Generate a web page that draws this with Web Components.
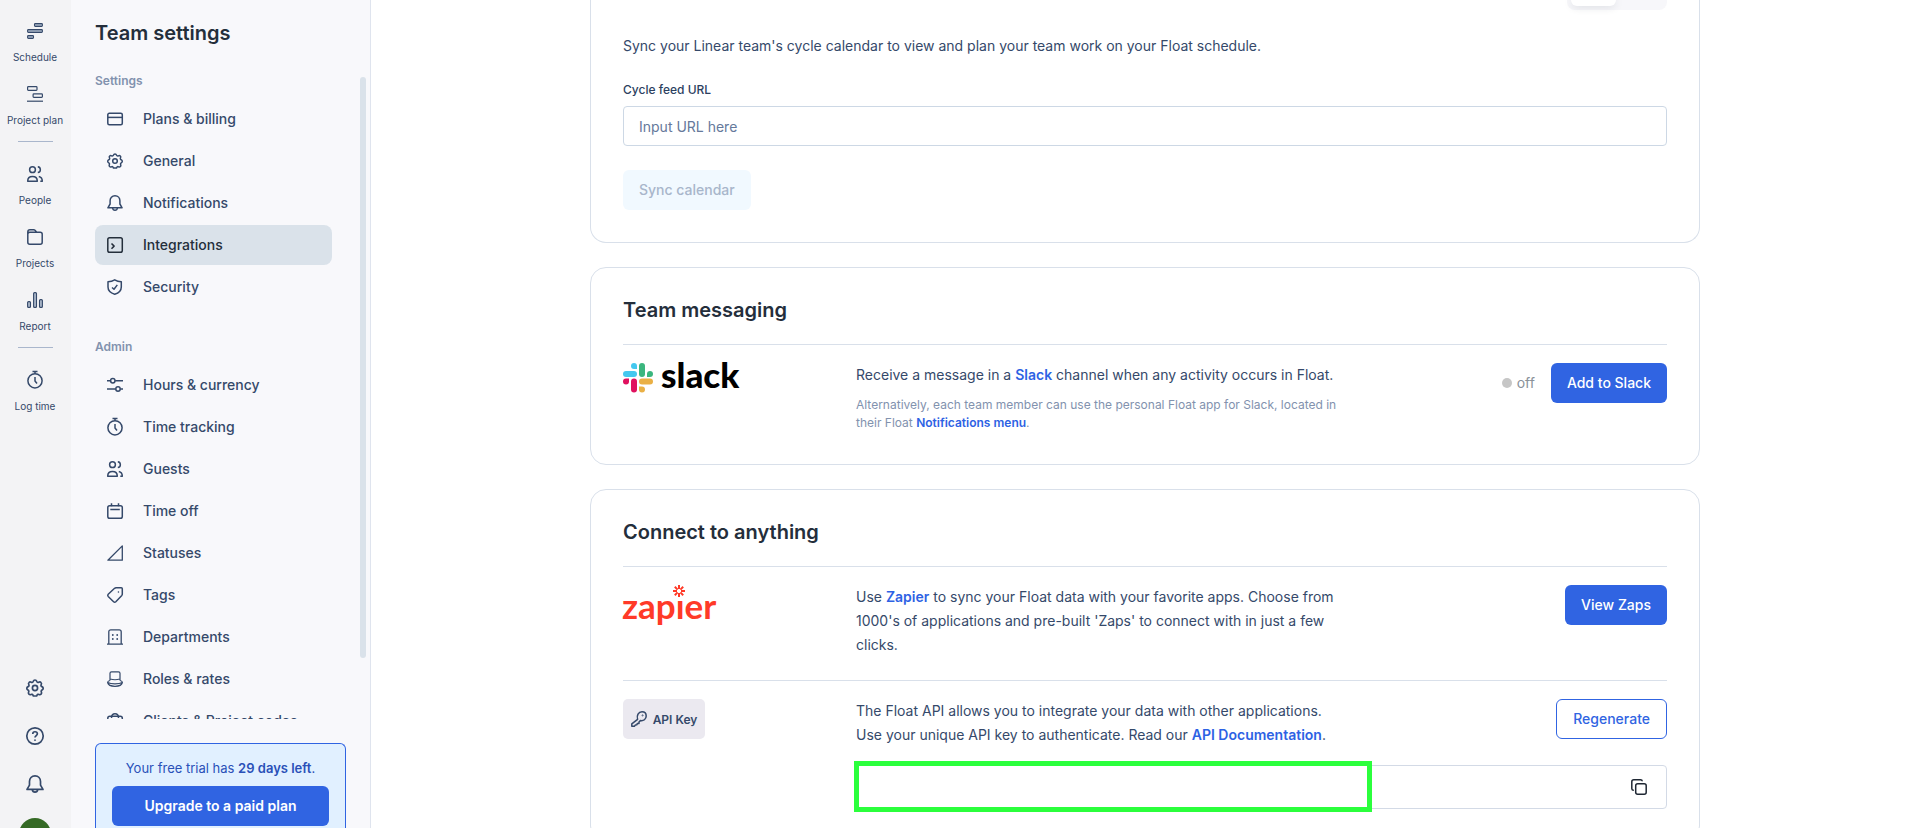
<!DOCTYPE html>
<html lang="en">
<head>
<meta charset="utf-8">
<title>Team settings</title>
<style>
  body {
    margin: 0;
    font-family: Inter, "Liberation Sans", sans-serif;
    font-size: 14px;
    color: #35496a;
    background: #fff;
    --ink: #242e3b;
    --text: #35496a;
    --muted: #8292ae;
    --line: #d9e0ea;
    --blue: #3064e2;
  }
</style>
</head>
<body>
<float-app></float-app>

<script>
const gear = '<path d="M8 .9c.8 0 1.300.4 1.500 1.100.3.900 1.100 1.200 1.900.800.7-.4 1.400-.3 1.900.3.500.500.6 1.200.2 1.800-.4.9-.1 1.600.7 1.900.7.300 1.100.8 1.100 1.500s-.4 1.200-1 1.500c-.8.4-1 1.100-.6 1.900.3.700.200 1.300-.3 1.800s-1.200.6-1.800.3c-.8-.4-1.500-.1-1.800.6l-.3.700h-3l-.3-.7c-.3-.7-1-1-1.800-.6-.6.300-1.300.2-1.800-.3s-.6-1.100-.3-1.800c.4-.8.2-1.500-.6-1.900-.6-.3-1-.8-1-1.500s.4-1.200 1.100-1.500c.8-.3 1.100-1 .7-1.900-.4-.6-.3-1.300.2-1.800.5-.6 1.200-.7 1.900-.3.800.4 1.600.1 1.900-.8.200-.7.700-1.100 1.500-1.100z"/><circle cx="8" cy="8" r="2.300"/>';
const people = '<circle cx="5.500" cy="3.700" r="2.900"/><path d="M.7 15.200c0-2.700 1.900-4.700 4.800-4.700s4.800 2 4.800 4.700z"/><path d="M10.800.8c3.400.4 3.400 5.400 0 5.800M11.800 10.500c2.200.5 3.500 2.300 3.500 4.700h-2"/>';
const watch = '<circle cx="8" cy="8.800" r="7.100"/><path d="M5.500-.6h5M8 5v4l2 2.500M8-.5v2"/>';
const bell = '<path d="M8 .8c-3 0-4.900 2.200-4.900 5v3.200L.9 12.800h14.200L12.900 9V5.800c0-2.800-1.900-5-4.900-5z"/><path d="M5.600 13c.2 1.500 1.200 2.200 2.400 2.200s2.200-.7 2.400-2.200"/>';
const ICONS = {
  gear, people, watch, bell,
  schedule: '<g fill="#a9b6c8" stroke-width="1.100"><rect x="7.500" y=".6" width="7.900" height="2.800" rx=".8"/><rect x=".6" y="6.600" width="14.800" height="2.800" rx=".8"/><rect x=".6" y="12.600" width="5.900" height="2.800" rx=".8"/></g>',
  plan: '<g stroke-width="1.200"><rect x=".6" y=".6" width="9.400" height="3.800" rx=".8"/><rect x="6.100" y="7.900" width="9.300" height="3.500" rx=".8"/><path d="M0 15.200h16"/></g>',
  folder: '<path d="M.8 3v10.200c0 1.100.8 2 2 2h10.400c1.200 0 2-.9 2-2V5.200c0-1.200-.8-2-2-2H9.700L8 1.300C7.600.9 7.200.8 6.700.8H3C1.700.8.8 1.700.8 3zM1 4.300c.4-.7 1-1.100 1.800-1.100h7"/>',
  report: '<g fill="#a9b6c8" stroke-width="1.100"><rect x=".6" y="9.600" width="2.900" height="5.800" rx="1"/><rect x="6.600" y=".6" width="2.900" height="14.800" rx="1"/><rect x="12.500" y="7.600" width="2.900" height="7.800" rx="1"/></g>',
  help: '<circle cx="8" cy="8" r="7.300"/><path d="M6 6.200c0-1.300.9-2 2-2s2.100.7 2.100 1.900c0 1.500-2.100 1.600-2.100 3.300"/><circle cx="8" cy="11.700" r=".5" fill="currentColor" stroke-width=".6"/>',
  card: '<rect x=".8" y="2.300" width="14.500" height="11.500" rx="1.500"/><path d="M1 6.400h14"/>',
  terminal: '<rect x=".8" y=".8" width="14.500" height="14.500" rx="1.800"/><path d="M4.500 6.500l2.600 2.600-2.600 2.600"/>',
  shield: '<path d="M7.700.8c2 1.200 4.200 1.800 6.600 1.900v5.400c0 3.600-3.200 6.200-6.600 7.200C4.300 14.300 1 11.700 1 8.100V2.700C3.500 2.600 5.700 2 7.700.8z"/><path d="M5 8.500l2 1.700 3.300-4.300"/>',
  sliders: '<circle cx="5.800" cy="3.700" r="2.200"/><circle cx="11" cy="12" r="2.200"/><path d="M0 3.700h3.500M8.200 3.700H16M0 12h8.700M13.400 12H16"/>',
  calendar: '<rect x=".8" y="2.800" width="14.500" height="12.400" rx="1.800"/><path d="M4.500.3v3M11.500.3v3M3.300 6.500h9.500"/>',
  triangle: '<path d="M15.300.9v14.300H.9z" stroke-width="1.300"/>',
  tag: '<path d="M9 .8h5.300c.6 0 1 .4 1 1V7c0 .5-.2 1-.5 1.400l-6 6.300c-.7.700-1.500.7-2.200 0L1.200 9.500c-.6-.7-.6-1.500 0-2.200L7.600 1.300C8 1 8.500.8 9 .8z"/><circle cx="11.400" cy="5" r=".5" stroke-width=".8"/>',
  building: '<path d="M0 15.200h16M1.800 15V2.800c0-1.200.8-2 2-2h8.400c1.200 0 2 .8 2 2V15" stroke-width="1.300"/><g fill="currentColor" stroke="none"><circle cx="5.800" cy="6" r=".9"/><circle cx="10.200" cy="6" r=".9"/><circle cx="5.800" cy="10" r=".9"/><circle cx="10.200" cy="10" r=".9"/></g>',
  hat: '<path d="M3 9.500V2.300C3 1.300 3.600.8 4.500.8h7c.9 0 1.500.5 1.500 1.500v7.200M3.200 8c2.800.9 6.800.9 9.600 0M3 9.500C.9 9.900.6 10.700.6 11.500c.5 2.300 3.600 3.800 7.400 3.800s6.900-1.500 7.400-3.800c0-.8-.3-1.600-2.400-2M.8 11.500c3.200 1.700 11.200 1.700 14.400 0" stroke-width="1.200"/>',
  briefcase: '<rect x=".8" y="3.300" width="14.500" height="11.500" rx="2"/><path d="M4.500 5C4.500 2.200 5.800.8 8 .8S11.500 2.200 11.500 5"/>',
  key: '<path d="M6.600 8.300C5.400 4.600 7.400.8 11 .8c2.600 0 4.200 1.900 4.200 4.200 0 3.300-2.800 5.200-5.800 4.600L8 11v1.500H6.300l-.4 1.300-1.500.2-1 1.200H.8v-2.300z"/><circle cx="11.600" cy="4.400" r=".6" stroke-width=".8"/>',
  copy: '<rect x="4.700" y="4.700" width="10.500" height="10.500" rx="2"/><path d="M2.800 11.200H2.300C1.400 11 .8 10.400.8 9.400V2.800c0-1.200.8-2 2-2h6.700c1 0 1.700.5 1.800 1.500"/>'
};

function define(name, html, setup) {
  const tpl = document.createElement('template');
  tpl.innerHTML = html;
  customElements.define(name, class extends HTMLElement {
    constructor() {
      super();
      this.attachShadow({ mode: 'open' }).append(tpl.content.cloneNode(true));
    }
    connectedCallback() {
      if (setup) setup(this, this.shadowRoot);
    }
  });
}

function addIcon(el, root) {
  const icon = document.createElement('ui-icon');
  icon.setAttribute('name', el.getAttribute('icon'));
  root.querySelector('a').prepend(icon);
}

define('ui-icon', `
  <style>
    :host { display: block; flex: none; width: 16px; height: 16px; }
    svg { display: block; width: 100%; height: 100%; overflow: visible; fill: none; stroke: currentColor; stroke-width: 1.500; stroke-linejoin: round; stroke-linecap: butt; }
  </style>
  <svg viewBox="0 0 16 16" aria-hidden="true"></svg>`,
  (el, root) => { root.querySelector('svg').innerHTML = ICONS[el.getAttribute('name')]; });

define('ui-button', `
  <style>
    :host { display: block; flex: none; }
    button { display: block; width: 100%; height: 40px; margin: 0; padding: 0 16px; border: 0; border-radius: 6px; background: var(--blue); color: #fff; font: 500 14px/20px Inter, "Liberation Sans", sans-serif; white-space: nowrap; }
    :host([kind=outline]) button { border: 1px solid var(--blue); background: #fff; color: var(--blue); }
    :host([kind=bold]) button { font-weight: 600; }
    button:disabled { background: #f1f9ff; color: #a8b6cb; }
  </style>
  <button type="button"><slot></slot></button>`,
  (el, root) => { root.querySelector('button').disabled = el.hasAttribute('disabled'); });

define('ui-link', `
  <style>
    :host { display: inline; }
    a { color: #2d62e4; font-weight: 600; text-decoration: none; }
  </style>
  <a href="#"><slot></slot></a>`);

define('rail-item', `
  <style>
    :host { display: block; height: 63px; }
    a { display: flex; flex-direction: column; align-items: center; gap: 10px; padding-top: 8px; color: inherit; text-decoration: none; font-size: 10px; line-height: 16px; white-space: nowrap; }
  </style>
  <a href="#"><slot></slot></a>`, addIcon);

define('app-rail', `
  <style>
    :host { display: flex; flex-direction: column; justify-content: space-between; align-items: flex-start; width: 71px; box-sizing: border-box; padding-top: 15px; background: #f3f3f5; }
    nav { width: 70px; }
    hr { width: 35px; height: 1px; margin: 0 auto 16px; border: 0; background: #a9b6cc; }
    .foot { display: flex; flex-direction: column; align-items: center; gap: 30px; width: 70px; margin-bottom: -22px; }
    .foot ui-icon { width: 18px; height: 18px; }
    .foot button { padding: 0; border: 0; background: none; color: inherit; }
    .avatar { width: 32px; height: 32px; margin-top: -5px; border-radius: 50%; background: #356a25; }
  </style>
  <nav>
    <rail-item icon="schedule">Schedule</rail-item>
    <rail-item icon="plan">Project plan</rail-item>
    <hr>
    <rail-item icon="people">People</rail-item>
    <rail-item icon="folder">Projects</rail-item>
    <rail-item icon="report">Report</rail-item>
    <hr>
    <rail-item icon="watch">Log time</rail-item>
  </nav>
  <div class="foot">
    <button type="button"><ui-icon name="gear"></ui-icon></button>
    <button type="button"><ui-icon name="help"></ui-icon></button>
    <button type="button"><ui-icon name="bell"></ui-icon></button>
    <div class="avatar"></div>
  </div>`);

define('nav-item', `
  <style>
    :host { display: block; }
    a { display: flex; align-items: center; gap: 20px; height: 40px; padding: 0 12px; border-radius: 8px; color: var(--text); font-weight: 500; line-height: 20px; text-decoration: none; white-space: nowrap; }
    :host([active]) a { background: #dae2ea; color: var(--ink); }
  </style>
  <a href="#"><slot></slot></a>`, addIcon);

define('nav-group', `
  <style>
    :host { display: grid; gap: 2px; }
    h2 { margin: 0 0 8px; color: var(--muted); font-size: 12px; font-weight: 600; line-height: 16px; }
  </style>
  <h2></h2>
  <slot></slot>`,
  (el, root) => { root.querySelector('h2').textContent = el.getAttribute('label'); });

define('trial-box', `
  <style>
    :host { display: block; padding: 15px 16px; border: 1px solid var(--blue); border-radius: 6px; background: #e1f0ff; color: #2a50b8; font-size: 13px; line-height: 18px; text-align: center; }
    p { margin: 0 0 9px; }
    b { font-weight: 600; }
  </style>
  <p>Your free trial has <b>29 days left</b>.</p>
  <ui-button kind="bold">Upgrade to a paid plan</ui-button>`);

define('settings-panel', `
  <style>
    :host { display: flex; flex-direction: column; width: 300px; box-sizing: border-box; padding: 23px 4px 0 24px; border-right: 1px solid #dfe4ee; background: #f8f8fb; }
    h1 { margin: 0 0 30px; color: var(--ink); font-size: 20px; font-weight: 600; line-height: 20px; }
    .body { display: flex; justify-content: space-between; flex: 1; min-height: 0; margin-bottom: 24px; }
    .list { display: flex; flex-direction: column; gap: 32px; width: 237px; overflow: hidden; }
    .thumb { width: 6px; height: 90%; margin-top: 4px; border-radius: 3px; background: #dae2ea; }
    trial-box { flex: none; height: 85px; box-sizing: border-box; margin-right: 20px; padding-bottom: 0; border-bottom: 0; border-radius: 6px 6px 0 0; }
  </style>
  <h1>Team settings</h1>
  <div class="body">
    <div class="list">
      <nav-group label="Settings">
        <nav-item icon="card">Plans &amp; billing</nav-item>
        <nav-item icon="gear">General</nav-item>
        <nav-item icon="bell">Notifications</nav-item>
        <nav-item icon="terminal" active>Integrations</nav-item>
        <nav-item icon="shield">Security</nav-item>
      </nav-group>
      <nav-group label="Admin">
        <nav-item icon="sliders">Hours &amp; currency</nav-item>
        <nav-item icon="watch">Time tracking</nav-item>
        <nav-item icon="people">Guests</nav-item>
        <nav-item icon="calendar">Time off</nav-item>
        <nav-item icon="triangle">Statuses</nav-item>
        <nav-item icon="tag">Tags</nav-item>
        <nav-item icon="building">Departments</nav-item>
        <nav-item icon="hat">Roles &amp; rates</nav-item>
        <nav-item icon="briefcase">Clients &amp; Project codes</nav-item>
      </nav-group>
    </div>
    <div class="thumb"></div>
  </div>
  <trial-box></trial-box>`);

define('ui-card', `
  <style>
    :host { display: block; padding: 32px; border: 1px solid var(--line); border-radius: 16px; background: #fff; }
    :host([scrolled]) { padding-top: 0; border-top: 0; border-radius: 0 0 16px 16px; }
    h2 { margin: 0 0 24px; color: var(--ink); font-size: 20px; font-weight: 600; line-height: 20px; }
    :host([scrolled]) h2 { display: none; }
  </style>
  <h2></h2>
  <slot></slot>`,
  (el, root) => { root.querySelector('h2').textContent = el.getAttribute('heading') || ''; });

define('integration-row', `
  <style>
    :host { display: grid; grid-template-columns: 233px minmax(0, 1fr) auto; align-items: start; padding: 18px 0 23px; border-top: 1px solid var(--line); }
    :host([last]) { padding-bottom: 0; }
    .text { max-width: 484px; line-height: 24px; }
    .actions { display: flex; align-items: center; gap: 16px; }
    .below { grid-column: 2 / -1; }
  </style>
  <slot name="logo"></slot>
  <div class="text"><slot></slot></div>
  <div class="actions"><slot name="action"></slot></div>
  <div class="below"><slot name="below"></slot></div>`);

define('status-flag', `
  <style>
    :host { display: flex; align-items: center; gap: 5px; color: #8a9199; line-height: 20px; }
    i { width: 10px; height: 10px; border-radius: 50%; background: #c6c6c6; }
  </style>
  <i></i><slot></slot>`);

define('small-note', `
  <style>
    :host { display: block; margin-top: 9px; color: var(--muted); font-size: 12px; line-height: 18px; }
  </style>
  <slot></slot>`);

define('slack-logo', `
  <style>
    :host { display: block; }
    svg { display: block; overflow: visible; }
    text { font: 900 35px Lato, sans-serif; fill: #000; }
  </style>
  <svg width="120" height="30" viewBox="0 0 120 30">
    <g fill="#44c8ef"><path d="M11 0a3 3 0 0 1 3 3v3h-3a3 3 0 0 1 0-6z"/><rect y="8" width="14" height="6" rx="3"/></g>
    <g fill="#3bb67e"><rect x="16" width="6" height="14" rx="3"/><path d="M24 14v-3a3 3 0 1 1 3 3z"/></g>
    <g fill="#eab045"><rect x="16" y="15.500" width="14" height="6" rx="3"/><path d="M16 23.500h3a3 3 0 1 1-3 3z"/></g>
    <g fill="#e0115f"><path d="M6 15.500v3a3 3 0 1 1-3-3z"/><rect x="8" y="15.500" width="6" height="14" rx="3"/></g>
    <text x="38" y="25">slack</text>
  </svg>`);

define('zapier-logo', `
  <style>
    :host { display: block; }
    svg { display: block; overflow: visible; }
    text { font: 700 35px Lato, sans-serif; fill: #ff3a28; }
  </style>
  <svg width="100" height="42" viewBox="0 0 100 42">
    <text x="-1" y="34">zapier</text>
    <rect x="49" y="0" width="14" height="14" fill="#fff"/>
    <path d="M56 0v4M56 8v4M50 6h4M58 6h4M51.800 1.800l2.800 2.800M57.400 7.400l2.800 2.800M60.200 1.800l-2.800 2.800M54.600 7.400l-2.800 2.800" stroke="#ff3a28" stroke-width="2"/>
  </svg>`);

define('key-chip', `
  <style>
    :host { display: flex; align-items: center; justify-content: center; justify-self: start; gap: 6px; width: 82px; height: 40px; border-radius: 5px; background: #ebe9f0; font-size: 12px; font-weight: 600; white-space: nowrap; }
  </style>
  <ui-icon name="key"></ui-icon><slot></slot>`);

define('key-field', `
  <style>
    :host { display: block; position: relative; margin-top: 18px; }
    .box { display: flex; align-items: center; height: 44px; box-sizing: border-box; padding-right: 19px; border: 1px solid #d3dae6; border-radius: 4px; }
    input { flex: 1; min-width: 0; height: 40px; padding: 0 16px; border: 0; outline: 0; background: none; font: inherit; color: inherit; }
    button { padding: 0; border: 0; background: none; color: #1f2733; }
    .mark { position: absolute; left: -2px; top: -4px; width: 518px; max-width: 100%; height: 51px; box-sizing: border-box; border: 5px solid #2bff3c; background: #fff; }
  </style>
  <div class="box"><input type="text" readonly><button type="button"><ui-icon name="copy"></ui-icon></button></div>
  <div class="mark"></div>`);

define('segment-toggle', `
  <style>
    :host { display: block; width: 100px; height: 10px; box-sizing: border-box; margin: 0 0 24px auto; padding-left: 4px; border-radius: 0 0 8px 8px; background: #f7f7fa; }
    div { width: 45px; height: 6px; border-radius: 0 0 6px 6px; background: #fff; box-shadow: 0 1px 8px rgba(30, 40, 60, .14); }
  </style>
  <div></div>`);

define('cycle-form', `
  <style>
    :host { display: block; }
    p { margin: 0 0 23px; line-height: 24px; }
    label { display: block; margin-bottom: 7px; color: #2c3f5f; font-size: 12px; font-weight: 500; line-height: 18px; }
    input { display: block; width: 100%; height: 40px; box-sizing: border-box; margin-bottom: 24px; padding: 0 15px; border: 1px solid #cdd8e5; border-radius: 4px; background: #fff; color: inherit; font: 400 14px/20px Inter, "Liberation Sans", sans-serif; }
    input::placeholder { color: #65799b; opacity: 1; }
    .act { display: flex; }
  </style>
  <p>Sync your Linear team's cycle calendar to view and plan your team work on your Float schedule.</p>
  <label for="feed">Cycle feed URL</label>
  <input id="feed" type="text" placeholder="Input URL here">
  <div class="act"><ui-button disabled>Sync calendar</ui-button></div>`);

define('integrations-page', `
  <style>
    :host { display: block; min-width: 0; padding-left: 1px; overflow: hidden; }
    main { display: grid; gap: 24px; max-width: 1110px; margin: 0 auto; }
  </style>
  <main>
    <ui-card scrolled>
      <segment-toggle></segment-toggle>
      <cycle-form></cycle-form>
    </ui-card>
    <ui-card heading="Team messaging">
      <integration-row last>
        <slack-logo slot="logo"></slack-logo>
        Receive a message in a <ui-link>Slack</ui-link> channel when any activity occurs in Float.
        <small-note>Alternatively, each team member can use the personal Float app for Slack, located in their Float <ui-link>Notifications menu</ui-link>.</small-note>
        <status-flag slot="action">off</status-flag>
        <ui-button slot="action">Add to Slack</ui-button>
      </integration-row>
    </ui-card>
    <ui-card heading="Connect to anything">
      <integration-row>
        <zapier-logo slot="logo"></zapier-logo>
        Use <ui-link>Zapier</ui-link> to sync your Float data with your favorite apps. Choose from 1000's of applications and pre-built 'Zaps' to connect with in just a few clicks.
        <ui-button slot="action">View Zaps</ui-button>
      </integration-row>
      <integration-row last>
        <key-chip slot="logo">API Key</key-chip>
        The Float API allows you to integrate your data with other applications. Use your unique API key to authenticate. Read our <ui-link>API Documentation</ui-link>.
        <ui-button slot="action" kind="outline">Regenerate</ui-button>
        <key-field slot="below"></key-field>
      </integration-row>
    </ui-card>
  </main>`);

define('float-app', `
  <style>
    :host { display: grid; grid-template-columns: auto auto minmax(0, 1fr); grid-template-rows: minmax(0, 1fr); height: 100vh; overflow: hidden; }
  </style>
  <app-rail></app-rail>
  <settings-panel></settings-panel>
  <integrations-page></integrations-page>`);
</script>
</body>
</html>
